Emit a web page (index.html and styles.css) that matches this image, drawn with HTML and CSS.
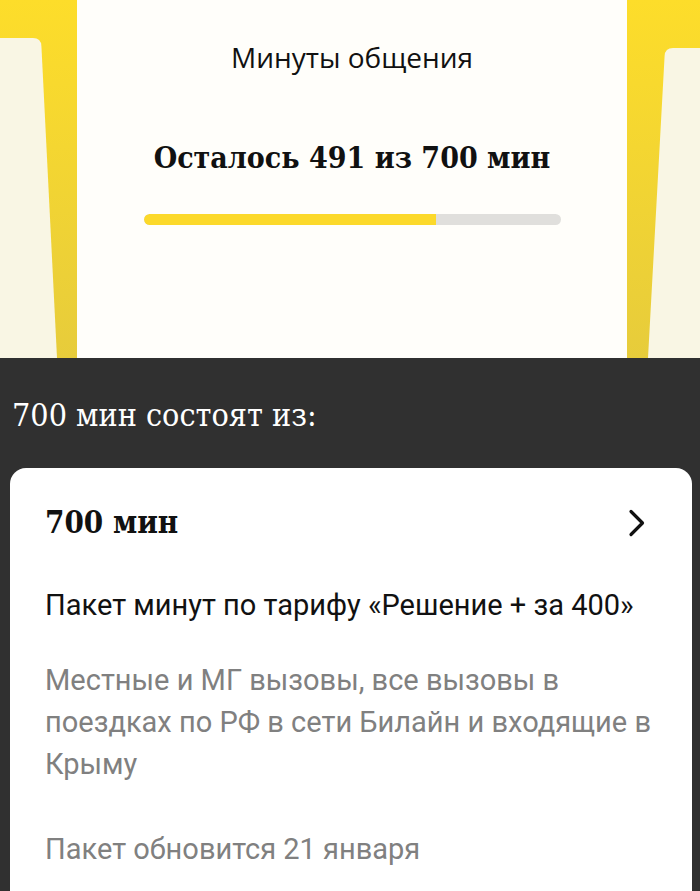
FILE: index.html
```html
<!DOCTYPE html>
<html lang="ru">
<head>
<meta charset="utf-8">
<link rel="stylesheet" href="styles.css">
</head>
<body>
<section class="carousel">
  <div class="peek peek-left">
    <svg width="77" height="358" viewBox="0 0 77 358">
      <defs>
        <linearGradient id="yl" x1="0" y1="0" x2="0" y2="1">
          <stop offset="0" stop-color="#fddd2a"/>
          <stop offset="1" stop-color="#e7cc3b"/>
        </linearGradient>
      </defs>
      <rect width="77" height="358" fill="url(#yl)"/>
      <path d="M0 38 L33 38 Q41 38 41.4 46 L57 358 L0 358 Z" fill="#f9f6e4"/>
    </svg>
  </div>
  <div class="main-card">
    <div class="title">Минуты общения</div>
    <div class="remain">Осталось 491 из 700 мин</div>
    <div class="bar"><div class="fill" style="width:70.1%"></div></div>
  </div>
  <div class="peek peek-right">
    <svg width="73" height="358" viewBox="0 0 73 358">
      <defs>
        <linearGradient id="yr" x1="0" y1="0" x2="0" y2="1">
          <stop offset="0" stop-color="#fddd2a"/>
          <stop offset="1" stop-color="#e7cc3b"/>
        </linearGradient>
      </defs>
      <rect width="73" height="358" fill="url(#yr)"/>
      <path d="M46 48 L73 48 L73 358 L21 358 L37.6 56 Q38 48 46 48 Z" fill="#f9f6e4"/>
    </svg>
  </div>
</section>
<section class="details">
  <h2 class="details-title">700 мин состоят из:</h2>
  <div class="pack">
    <div class="pack-head">
      <span class="pack-amount">700 мин</span>
      <svg class="chev" width="18" height="28" viewBox="0 0 18 28"><path d="M3 2.5 L14.5 14 L3 25.5" fill="none" stroke="#111" stroke-width="3.2" stroke-linecap="round" stroke-linejoin="round"/></svg>
    </div>
    <div class="pack-name">Пакет минут по тарифу «Решение + за 400»</div>
    <div class="pack-desc">Местные и МГ вызовы, все вызовы в поездках по РФ в сети Билайн и входящие в Крыму</div>
    <div class="pack-renew">Пакет обновится 21 января</div>
  </div>
</section>
</body>
</html>
```
FILE: styles.css
```css
html, body {
  margin: 0;
  padding: 0;
}
body {
  width: 700px;
  height: 891px;
  overflow: hidden;
  background: #303030;
}
.carousel {
  display: flex;
  height: 358px;
  background: #fffefa;
}
.peek svg {
  display: block;
}
.main-card {
  width: 550px;
  display: flex;
  flex-direction: column;
  align-items: center;
  background: #fffefa;
}
.title {
  margin-top: 38px;
  font-family: "Open Sans", sans-serif;
  font-size: 28px;
  line-height: 38px;
  color: #111;
}
.remain {
  margin-top: 62px;
  font-family: "DejaVu Serif", serif;
  font-stretch: condensed;
  font-size: 30px;
  font-weight: bold;
  line-height: 40px;
  color: #111;
}
.bar {
  margin-top: 36px;
  margin-left: 1px;
  width: 417px;
  height: 11px;
  border-radius: 6px;
  background: #e0dfdc;
  overflow: hidden;
}
.fill {
  height: 100%;
  background: #fcd92a;
  border-radius: 6px 0 0 6px;
}
.details {
  padding: 0 8px 0 10px;
}
.details-title {
  margin: 0;
  padding-top: 37px;
  font-family: "DejaVu Serif", serif;
  font-stretch: condensed;
  font-weight: normal;
  font-size: 32px;
  line-height: 40px;
  color: #fff;
  padding-left: 2px;
}
.pack {
  box-sizing: border-box;
  margin-top: 33px;
  background: #fff;
  border-radius: 16px 16px 0 0;
  padding: 32px 20px 0 35px;
  height: 423px;
}
.pack-head {
  display: flex;
  justify-content: space-between;
  align-items: center;
}
.pack-amount {
  font-family: "DejaVu Serif", serif;
  font-stretch: condensed;
  font-weight: bold;
  font-size: 31px;
  line-height: 44px;
  color: #111;
}
.chev {
  display: block;
  margin-top: 2px;
  margin-right: 26px;
}
.pack-name {
  margin-top: 43px;
  font-family: Roboto, sans-serif;
  font-size: 29px;
  line-height: 36px;
  color: #111;
}
.pack-desc {
  margin-top: 36px;
  font-family: Roboto, sans-serif;
  font-size: 29px;
  line-height: 42px;
  color: #808080;
}
.pack-renew {
  margin-top: 43px;
  font-family: Roboto, sans-serif;
  font-size: 29px;
  line-height: 42px;
  color: #808080;
}
```
